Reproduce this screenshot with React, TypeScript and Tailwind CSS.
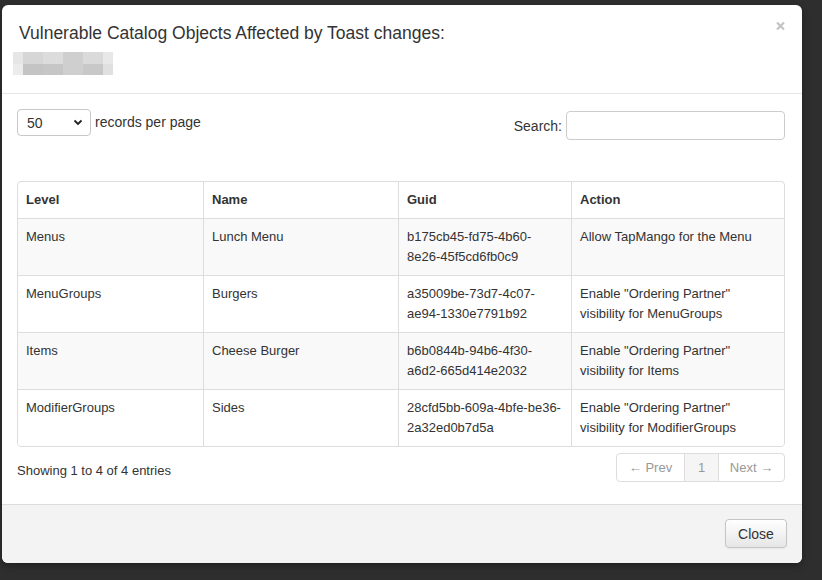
const rows = [
  {
    level: "Menus",
    name: "Lunch Menu",
    guid: ["b175cb45-fd75-4b60-", "8e26-45f5cd6fb0c9"],
    action: ["Allow TapMango for the Menu"],
  },
  {
    level: "MenuGroups",
    name: "Burgers",
    guid: ["a35009be-73d7-4c07-", "ae94-1330e7791b92"],
    action: ['Enable "Ordering Partner"', "visibility for MenuGroups"],
  },
  {
    level: "Items",
    name: "Cheese Burger",
    guid: ["b6b0844b-94b6-4f30-", "a6d2-665d414e2032"],
    action: ['Enable "Ordering Partner"', "visibility for Items"],
  },
  {
    level: "ModifierGroups",
    name: "Sides",
    guid: ["28cfd5bb-609a-4bfe-be36-", "2a32ed0b7d5a"],
    action: ['Enable "Ordering Partner"', "visibility for ModifierGroups"],
  },
];

// pixelated redaction under the title
const blurTop = ["#e6e6e6", "#d6d6d6", "#dcdcdc", "#cfcfcf", "#dadada", "#e8e8e8"];
const blurBottom = ["#ececec", "#c4c4c4", "#c6c6c6", "#cfcfcf", "#c8c8c8", "#e0e0e0"];
const blurWidths = ["w-[10px]", "w-[20px]", "w-[20px]", "w-[20px]", "w-[20px]", "w-[10px]"];

function Redacted() {
  return (
    <div className="mt-[7px] ml-[-6px] flex flex-col">
      <div className="flex h-[12px]">
        {blurTop.map((c, i) => (
          <div key={i} className={`${blurWidths[i]} h-full`} style={{ backgroundColor: c }} />
        ))}
      </div>
      <div className="flex h-[11px]">
        {blurBottom.map((c, i) => (
          <div key={i} className={`${blurWidths[i]} h-full`} style={{ backgroundColor: c }} />
        ))}
      </div>
    </div>
  );
}

export default function App() {
  return (
    <div
      className="w-[822px] h-[580px] bg-[#2e2e2e] pt-[5px] pl-[2px] overflow-hidden text-[#333] text-[14px] leading-[20px]"
      style={{ fontFamily: '"Liberation Sans", Arial, sans-serif' }}
    >
      <div className="relative w-[800px] h-[558px] bg-white rounded-[6px] overflow-hidden flex flex-col shadow-[0_3px_7px_rgba(0,0,0,0.3)]">
        {/* close icon */}
        <svg className="absolute top-[17px] right-[17px]" width="9" height="8" viewBox="0 0 9 8">
          <path d="M1 0.5 L8 7.5 M8 0.5 L1 7.5" stroke="#c4c4c4" strokeWidth="2.2" />
        </svg>

        <div className="pt-[16px] pl-[17px] pb-[18px] border-b border-[#e5e5e5]">
          <h3 className="text-[17.5px] leading-[24px] font-normal">
            Vulnerable Catalog Objects Affected by Toast changes:
          </h3>
          <Redacted />
        </div>

        <div className="pt-[15px] pl-[15px] pr-[17px] pb-[22px]">
          <div className="flex justify-between items-start">
            <div className="flex items-center">
              <div className="w-[74px] h-[27px] border border-[#c8c8c8] rounded-[4px] flex items-center justify-between pl-[9px] pr-[7px]">
                <span>50</span>
                <svg width="10" height="7" viewBox="0 0 10 7">
                  <path d="M1.5 1.5 L5 5 L8.5 1.5" stroke="#222" strokeWidth="1.8" fill="none" />
                </svg>
              </div>
              <span className="ml-[4px] -mt-[2px]">records per page</span>
            </div>
            <div className="flex items-center mt-[2px]">
              <span className="mr-[4px]">Search:</span>
              <div className="w-[219px] h-[29px] border border-[#ccc] rounded-[4px]" />
            </div>
          </div>

          <div className="mt-[41px] border border-[#ddd] rounded-[4px] overflow-hidden text-[13px]">
            <div className="grid grid-cols-[185px_195px_173px_213px]">
              {["Level", "Name", "Guid", "Action"].map((h, i) => (
                <div key={h} className={`p-[8px] font-bold ${i > 0 ? "border-l border-[#ddd]" : ""}`}>
                  {h}
                </div>
              ))}
            </div>
            {rows.map((r, idx) => (
              <div
                key={r.level}
                className={`grid grid-cols-[185px_195px_173px_213px] border-t border-[#ddd] h-[57px] ${
                  idx % 2 === 0 ? "bg-[#f9f9f9]" : "bg-white"
                }`}
              >
                <div className="p-[8px]">{r.level}</div>
                <div className="p-[8px] border-l border-[#ddd]">{r.name}</div>
                <div className="p-[8px] border-l border-[#ddd]">
                  {r.guid.map((g) => (
                    <div key={g}>{g}</div>
                  ))}
                </div>
                <div className="p-[8px] border-l border-[#ddd]">
                  {r.action.map((a) => (
                    <div key={a}>{a}</div>
                  ))}
                </div>
              </div>
            ))}
          </div>

          <div className="mt-[6px] flex justify-between items-start text-[13px]">
            <span className="mt-[8px]">Showing 1 to 4 of 4 entries</span>
            <div className="flex h-[29px] border border-[#ddd] rounded-[4px] text-[#999] overflow-hidden">
              <div className="w-[67px] flex items-center justify-center">← Prev</div>
              <div className="w-[34px] flex items-center justify-center bg-[#f5f5f5] border-l border-[#ddd]">1</div>
              <div className="w-[66px] flex items-center justify-center border-l border-[#ddd]">Next →</div>
            </div>
          </div>
        </div>

        <div className="flex-1 bg-[#f3f3f3] border-t border-[#ddd] flex justify-end items-start pt-[14px] pr-[15px]">
          <button className="w-[62px] h-[29px] rounded-[4px] border border-[#c5c5c5] bg-gradient-to-b from-white to-[#e6e6e6] text-[#333] shadow-[inset_0_1px_0_rgba(255,255,255,0.2),0_1px_2px_rgba(0,0,0,0.05)]">
            Close
          </button>
        </div>
      </div>
    </div>
  );
}
